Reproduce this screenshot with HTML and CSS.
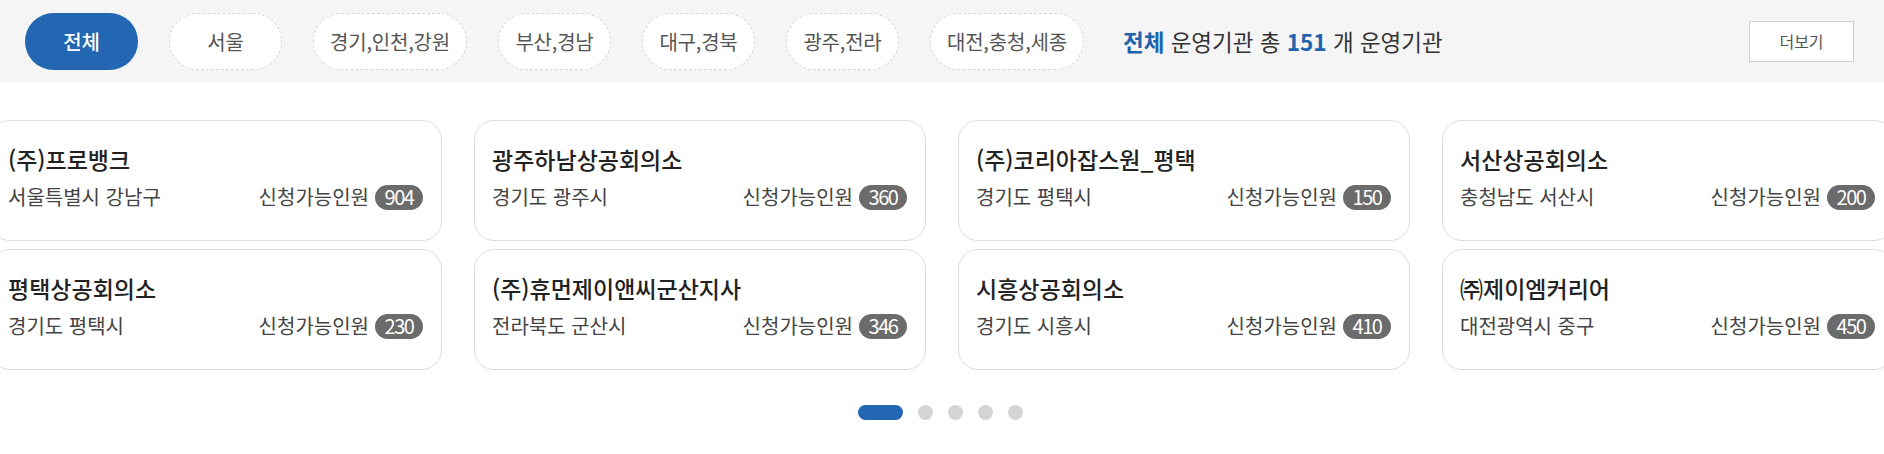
FILE: index.html
```html
<!DOCTYPE html>
<html lang="ko">
<head>
<meta charset="utf-8">
<title>운영기관</title>
<link rel="stylesheet" href="styles.css">
</head>
<body>
<div class="filter-bar">
  <div class="pills">
    <button class="pill active">전체</button>
    <button class="pill">서울</button>
    <button class="pill">경기,인천,강원</button>
    <button class="pill">부산,경남</button>
    <button class="pill">대구,경북</button>
    <button class="pill">광주,전라</button>
    <button class="pill">대전,충청,세종</button>
  </div>
  <p class="summary"><strong>전체</strong> 운영기관 총 <strong>151</strong> 개 운영기관</p>
  <button class="more">더보기</button>
</div>

<div class="slider">
  <div class="cards">
    <div class="card">
      <div class="card-title">(주)프로뱅크</div>
      <div class="card-info"><span>서울특별시 강남구</span><span class="avail">신청가능인원 <em class="badge">904</em></span></div>
    </div>
    <div class="card">
      <div class="card-title">광주하남상공회의소</div>
      <div class="card-info"><span>경기도 광주시</span><span class="avail">신청가능인원 <em class="badge">360</em></span></div>
    </div>
    <div class="card">
      <div class="card-title">(주)코리아잡스원_평택</div>
      <div class="card-info"><span>경기도 평택시</span><span class="avail">신청가능인원 <em class="badge">150</em></span></div>
    </div>
    <div class="card">
      <div class="card-title">서산상공회의소</div>
      <div class="card-info"><span>충청남도 서산시</span><span class="avail">신청가능인원 <em class="badge">200</em></span></div>
    </div>
    <div class="card">
      <div class="card-title">평택상공회의소</div>
      <div class="card-info"><span>경기도 평택시</span><span class="avail">신청가능인원 <em class="badge">230</em></span></div>
    </div>
    <div class="card">
      <div class="card-title">(주)휴먼제이앤씨군산지사</div>
      <div class="card-info"><span>전라북도 군산시</span><span class="avail">신청가능인원 <em class="badge">346</em></span></div>
    </div>
    <div class="card">
      <div class="card-title">시흥상공회의소</div>
      <div class="card-info"><span>경기도 시흥시</span><span class="avail">신청가능인원 <em class="badge">410</em></span></div>
    </div>
    <div class="card">
      <div class="card-title">㈜제이엠커리어</div>
      <div class="card-info"><span>대전광역시 중구</span><span class="avail">신청가능인원 <em class="badge">450</em></span></div>
    </div>
  </div>
</div>

<div class="dots">
  <span class="dot active"></span>
  <span class="dot"></span>
  <span class="dot"></span>
  <span class="dot"></span>
  <span class="dot"></span>
</div>
</body>
</html>
```

FILE: styles.css
```css
* { box-sizing: border-box; }
html, body {
  margin: 0;
  padding: 0;
  background: #fff;
  overflow: hidden;
  font-family: "Noto Sans CJK KR", "Noto Sans", sans-serif;
  color: #333;
}
.filter-bar {
  height: 82px;
  background: #f5f5f5;
  display: flex;
  align-items: center;
  padding: 0 30px 0 25px;
}
.pills {
  display: flex;
  gap: 31px;
  align-items: center;
}
.pill {
  height: 57px;
  min-width: 113px;
  padding: 0 16px;
  border: 1px dashed #d6d6d6;
  border-radius: 29px;
  background: #fff;
  font-family: inherit;
  font-size: 20px;
  letter-spacing: -0.2px;
  color: #555;
}
.pill.active {
  background: #2366b2;
  border-color: #2366b2;
  color: #fff;
  font-weight: 500;
}
.summary {
  margin: 0 0 0 39px;
  font-size: 22.5px;
  letter-spacing: 0;
  color: #333;
}
.summary strong {
  color: #1f63ad;
  font-weight: 700;
}
.more {
  margin-left: auto;
  width: 105px;
  height: 41px;
  background: #fff;
  border: 1px solid #cfcfcf;
  font-family: inherit;
  font-size: 16px;
  color: #555;
}
.slider {
  display: flex;
  justify-content: center;
  margin-top: 38px;
}
.cards {
  flex: none;
  display: grid;
  grid-template-columns: repeat(4, 452px);
  gap: 8px 32px;
}
.card {
  height: 121px;
  border: 1px solid #dcdcdc;
  border-radius: 20px;
  background: #fff;
  padding: 22px 18px 0 17px;
}
.card-title {
  font-size: 23px;
  font-weight: 500;
  color: #222;
  line-height: 32px;
}
.card-info {
  display: flex;
  justify-content: space-between;
  align-items: center;
  margin-top: 8px;
  font-size: 20px;
  color: #444;
  line-height: 28px;
}
.avail {
  display: flex;
  align-items: center;
  gap: 6px;
}
.badge {
  font-style: normal;
  display: inline-flex;
  align-items: center;
  justify-content: center;
  min-width: 48px;
  height: 25px;
  padding: 0 4px;
  border-radius: 13px;
  background: #6b6b6b;
  color: #fff;
  font-size: 20px;
  letter-spacing: -1.5px;
  line-height: 1;
}
.dots {
  display: flex;
  justify-content: center;
  gap: 15px;
  margin-top: 35px;
  padding-right: 3px;
}
.dot {
  width: 15px;
  height: 15px;
  border-radius: 50%;
  background: #d4d4d4;
}
.dot.active {
  width: 45px;
  border-radius: 8px;
  background: #2366b2;
}
```
